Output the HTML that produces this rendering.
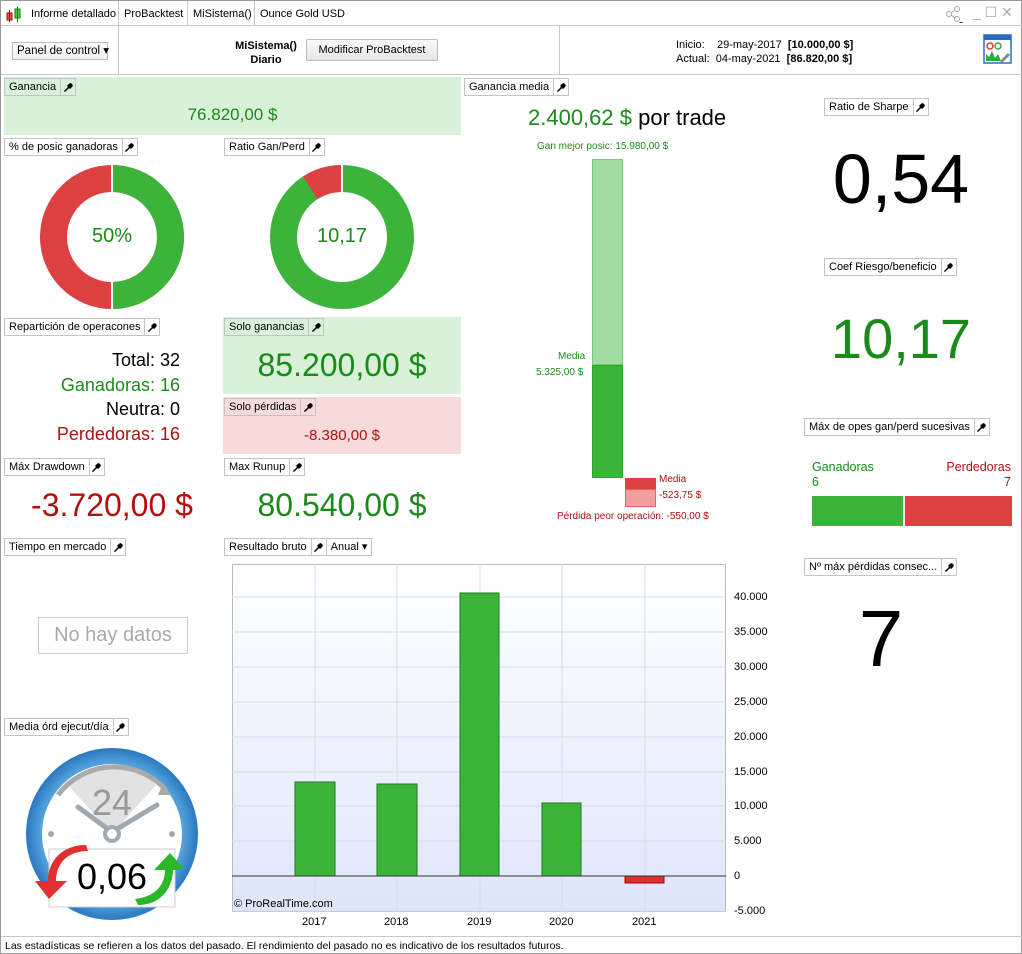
<!DOCTYPE html><html><head><meta charset="utf-8"><style>
*{margin:0;padding:0;box-sizing:border-box}
body{width:1022px;height:954px;position:relative;background:#fff;font-family:"Liberation Sans",Arial,sans-serif;font-size:11px;color:#000;overflow:hidden;border:1px solid #999}
.a{position:absolute}
.lb{position:absolute;height:18px;border:1px solid #c4c4c4;background:#fff;display:flex;font-size:11px;line-height:16px;white-space:nowrap}
.lb span{padding:0 4px}
.lb i{border-left:1px solid #c4c4c4;width:15px;display:flex;align-items:center;justify-content:center}
.g{color:#1a8a1a}.r{color:#b01010}
.c{text-align:center}
</style></head><body>
<svg width="0" height="0" style="position:absolute"><defs><symbol id="w" viewBox="0 0 10 10"><path d="M1 9L5 5M5 5L4.5 3L7 1L8 1.5L6.5 3L7 3.5L8.5 2L9 3L7 5.5L5 5Z" stroke="#000" stroke-width="1.6" fill="#000" stroke-linecap="round"/></symbol></defs></svg>
<!-- top bar -->
<div class="a" style="left:0;top:0;width:1022px;height:25px;border-bottom:1px solid #c8c8c8"></div>
<svg class="a" style="left:5px;top:6px" width="16" height="16"><rect x="1" y="6" width="5" height="7" fill="#e06060" stroke="#a00"/><line x1="3.5" y1="3" x2="3.5" y2="15" stroke="#a00"/><rect x="9" y="2" width="5" height="9" fill="#5c5" stroke="#080"/><line x1="11.5" y1="0" x2="11.5" y2="15" stroke="#080"/></svg>
<div class="a" style="left:30px;top:7px">Informe detallado</div>
<div class="a" style="left:117px;top:0;height:25px;border-left:1px solid #c8c8c8"></div>
<div class="a" style="left:123px;top:7px">ProBacktest</div>
<div class="a" style="left:186px;top:0;height:25px;border-left:1px solid #c8c8c8"></div>
<div class="a" style="left:192px;top:7px">MiSistema()</div>
<div class="a" style="left:253px;top:0;height:25px;border-left:1px solid #c8c8c8"></div>
<div class="a" style="left:259px;top:7px">Ounce Gold USD</div>
<svg class="a" style="left:944px;top:4px" width="20" height="18"><circle cx="4" cy="9" r="2.5" fill="none" stroke="#aaa"/><circle cx="12" cy="4" r="2.5" fill="none" stroke="#aaa"/><circle cx="12" cy="14" r="2.5" fill="none" stroke="#aaa"/><path d="M6 8L10 5M6 10L10 13" stroke="#aaa"/><path d="M14 17h4l-2 2z" fill="#333"/></svg>
<div class="a" style="left:972px;top:3px;color:#aaa;font-size:14px">_ ☐ ✕</div>
<!-- second row -->
<div class="a" style="left:0;top:73px;width:1022px;border-top:1px solid #c8c8c8"></div>
<div class="a" style="left:117px;top:25px;height:48px;border-left:1px solid #c8c8c8"></div>
<div class="a" style="left:558px;top:25px;height:48px;border-left:1px solid #c8c8c8"></div>
<div class="a" style="left:11px;top:41px;width:96px;height:18px;border:1px solid #bbb;background:linear-gradient(#fff,#eee);line-height:16px;padding-left:4px;font-size:11.5px;white-space:nowrap">Panel de control ▾</div>
<div class="a c" style="left:230px;top:38px;width:70px;font-weight:bold;line-height:14px">MiSistema()<br>Diario</div>
<div class="a c" style="left:305px;top:38px;width:132px;height:22px;border:1px solid #bbb;border-radius:2px;background:linear-gradient(#fafafa,#e6e6e6);line-height:20px">Modificar ProBacktest</div>
<div class="a" style="left:675px;top:37px;line-height:14px">Inicio:&nbsp;&nbsp;&nbsp; 29-may-2017&nbsp; <b>[10.000,00 $]</b><br>Actual:&nbsp; 04-may-2021&nbsp; <b>[86.820,00 $]</b></div>
<svg class="a" style="left:982px;top:33px" width="30" height="32"><rect x="1" y="1" width="27" height="28" fill="#fff" stroke="#2a6cc0" stroke-width="1.5"/><rect x="1" y="1" width="27" height="5" fill="#2a6cc0"/><circle cx="7" cy="12" r="3" fill="none" stroke="#d33" stroke-width="1.5"/><circle cx="15" cy="12" r="3" fill="none" stroke="#3a3" stroke-width="1.5"/><path d="M3 27V20l3 3 3-6 3 7 3-4 3 7z" fill="#3a3"/><path d="M18 28l8-8" stroke="#888" stroke-width="3"/></svg>
<!-- Ganancia -->
<div class="a" style="left:3px;top:76px;width:457px;height:58px;background:#d9f0d9"></div>
<div class="lb" style="left:3px;top:77px;background:#d9f0d9"><span>Ganancia</span><i><svg width="9" height="9"><use href="#w"/></svg></i></div>
<div class="a c g" style="left:3px;top:104px;width:457px;font-size:17px">76.820,00 $</div>
<!-- donuts -->
<div class="lb" style="left:3px;top:137px"><span>% de posic ganadoras</span><i><svg width="9" height="9"><use href="#w"/></svg></i></div>
<div class="lb" style="left:223px;top:137px"><span>Ratio Gan/Perd</span><i><svg width="9" height="9"><use href="#w"/></svg></i></div>
<svg class="a" style="left:39px;top:164px" width="144" height="144"><circle cx="72" cy="72" r="58.5" fill="none" stroke="#dc4040" stroke-width="27"/><path d="M72 13.5A58.5 58.5 0 0 1 72 130.5" fill="none" stroke="#3cb43c" stroke-width="27"/><line x1="72" y1="0" x2="72" y2="27" stroke="#fff" stroke-width="2"/><line x1="72" y1="117" x2="72" y2="144" stroke="#fff" stroke-width="2"/></svg>
<div class="a c g" style="left:39px;top:224px;width:144px;font-size:20px">50%</div>
<svg class="a" style="left:269px;top:164px" width="144" height="144"><circle cx="72" cy="72" r="58.5" fill="none" stroke="#3cb43c" stroke-width="27"/><path d="M72 13.5A58.5 58.5 0 0 0 40.3 22.8" fill="none" stroke="#dc4040" stroke-width="27"/><line x1="72" y1="0" x2="72" y2="27" stroke="#fff" stroke-width="2"/></svg>
<div class="a c g" style="left:269px;top:224px;width:144px;font-size:20px">10,17</div>
<!-- Reparticion -->
<div class="lb" style="left:3px;top:317px"><span>Repartición de operacones</span><i><svg width="9" height="9"><use href="#w"/></svg></i></div>
<div class="a" style="left:0;top:347px;width:179px;text-align:right;font-size:18px;line-height:24.5px"><div>Total: 32</div><div class="g">Ganadoras: 16</div><div>Neutra: 0</div><div class="r">Perdedoras: 16</div></div>
<div class="a" style="left:222px;top:316px;width:238px;height:77px;background:#d9f0d9"></div>
<div class="lb" style="left:223px;top:317px;background:#d9f0d9"><span>Solo ganancias</span><i><svg width="9" height="9"><use href="#w"/></svg></i></div>
<div class="a c g" style="left:222px;top:346px;width:238px;font-size:32px">85.200,00 $</div>
<div class="a" style="left:222px;top:396px;width:238px;height:57px;background:#f8dada"></div>
<div class="lb" style="left:223px;top:397px;background:#f8dada"><span>Solo pérdidas</span><i><svg width="9" height="9"><use href="#w"/></svg></i></div>
<div class="a c r" style="left:222px;top:426px;width:238px;font-size:15px">-8.380,00 $</div>
<div class="lb" style="left:3px;top:457px"><span>Máx Drawdown</span><i><svg width="9" height="9"><use href="#w"/></svg></i></div>
<div class="a c r" style="left:0;top:486px;width:222px;font-size:32px">-3.720,00 $</div>
<div class="lb" style="left:223px;top:457px"><span>Max Runup</span><i><svg width="9" height="9"><use href="#w"/></svg></i></div>
<div class="a c g" style="left:222px;top:486px;width:238px;font-size:32px">80.540,00 $</div>
<div class="lb" style="left:3px;top:537px"><span>Tiempo en mercado</span><i><svg width="9" height="9"><use href="#w"/></svg></i></div>
<div class="a c" style="left:37px;top:616px;width:150px;height:37px;border:1px solid #ccc;color:#aaa;font-size:20px;line-height:35px">No hay datos</div>
<div class="lb" style="left:3px;top:717px"><span>Media órd ejecut/día</span><i><svg width="9" height="9"><use href="#w"/></svg></i></div>
<!-- clock -->
<svg class="a" style="left:22px;top:744px" width="180" height="180">
<defs><radialGradient id="bg" cx="50%" cy="50%" r="50%"><stop offset="80%" stop-color="#5aa8e0"/><stop offset="100%" stop-color="#2a78c0"/></radialGradient></defs>
<circle cx="89" cy="89" r="86" fill="url(#bg)"/><circle cx="89" cy="89" r="70" fill="#fff"/>
<path d="M89 89L45 40A62 62 0 0 1 133 40Z" fill="#e2e2e2"/>
<path d="M35 50A70 70 0 0 1 143 45" fill="none" stroke="#aaa" stroke-width="5"/>
<path d="M140 38l8 12-13 0z" fill="#aaa"/>
<text x="89" y="70" text-anchor="middle" font-size="36" fill="#999" font-family="Liberation Sans">24</text>
<path d="M55 62L89 87L134 60" fill="none" stroke="#a0a8b0" stroke-width="5" stroke-linecap="round"/>
<circle cx="89" cy="89" r="7" fill="#fff" stroke="#a0a8b0" stroke-width="4"/>
<circle cx="28" cy="89" r="3" fill="#a0a8b0"/><circle cx="149" cy="89" r="3" fill="#a0a8b0"/>
<rect x="26" y="104" width="126" height="58" fill="#fff" stroke="#ccc"/>
<path d="M63 100C40 100 25 115 25 136L12 136L26 154L44 136L33 136C33 118 45 106 65 106Z" fill="#e03030"/>
<path d="M115 160C140 160 150 140 150 125L162 125L147 108L131 125L142 125C142 140 132 152 112 154Z" fill="#28b828"/>
</svg>
<div class="a c" style="left:48px;top:855px;width:126px;font-size:36px">0,06</div>
<!-- Ganancia media -->
<div class="lb" style="left:463px;top:77px"><span>Ganancia media</span><i><svg width="9" height="9"><use href="#w"/></svg></i></div>
<div class="a" style="left:527px;top:104px;font-size:22px"><span class="g">2.400,62 $</span> por trade</div>
<div class="a g" style="left:536px;top:140px;font-size:10px">Gan mejor posic: 15.980,00 $</div>
<div class="a" style="left:591px;top:158px;width:31px;height:206px;background:#a2dca2;border:1px solid #7c7"></div>
<div class="a" style="left:591px;top:364px;width:31px;height:113px;background:#3cb43c;border:1px solid #2a2"></div>
<div class="a g" style="left:557px;top:350px;font-size:10px">Media</div>
<div class="a g" style="left:535px;top:366px;font-size:10px">5.325,00 $</div>
<div class="a" style="left:624px;top:477px;width:31px;height:11px;background:#dc4040"></div>
<div class="a" style="left:624px;top:488px;width:31px;height:18px;background:#f0a0a0;border:1px solid #d66"></div>
<div class="a r" style="left:658px;top:473px;font-size:10px">Media</div>
<div class="a r" style="left:658px;top:489px;font-size:10px">-523,75 $</div>
<div class="a r" style="left:556px;top:510px;font-size:10px">Pérdida peor operación: -550,00 $</div>
<!-- Resultado bruto -->
<div class="lb" style="left:223px;top:537px"><span>Resultado bruto</span><i><svg width="9" height="9"><use href="#w"/></svg></i><span style="border-left:1px solid #c4c4c4">Anual ▾</span></div>
<div class="a" style="left:231px;top:563px;width:494px;height:348px;border:1px solid #bbb;background:linear-gradient(#fff,#dfe6fa)"></div>
<svg class="a" style="left:231px;top:563px" width="494" height="348">
<g stroke="#d8dce8"><line x1="0" y1="33" x2="494" y2="33"/><line x1="0" y1="68" x2="494" y2="68"/><line x1="0" y1="103" x2="494" y2="103"/><line x1="0" y1="138" x2="494" y2="138"/><line x1="0" y1="173" x2="494" y2="173"/><line x1="0" y1="208" x2="494" y2="208"/><line x1="0" y1="242" x2="494" y2="242"/><line x1="0" y1="277" x2="494" y2="277"/><line x1="0" y1="347" x2="494" y2="347"/>
<line x1="83" y1="0" x2="83" y2="348"/><line x1="165" y1="0" x2="165" y2="348"/><line x1="248" y1="0" x2="248" y2="348"/><line x1="330" y1="0" x2="330" y2="348"/><line x1="413" y1="0" x2="413" y2="348"/></g>
<g fill="#3cb43c" stroke="#1c7c1c"><rect x="63" y="218" width="40" height="94"/><rect x="145" y="220" width="40" height="92"/><rect x="228" y="29" width="39" height="283"/><rect x="310" y="239" width="39" height="73"/></g>
<rect x="393" y="312" width="39" height="7" fill="#dc3030" stroke="#a00"/>
<line x1="0" y1="312" x2="494" y2="312" stroke="#333"/>
</svg>
<div class="a" style="left:233px;top:897px;font-size:11px">© ProRealTime.com</div>
<div class="a" style="left:733px;top:579px;font-size:11px;line-height:34.9px">40.000<br>35.000<br>30.000<br>25.000<br>20.000<br>15.000<br>10.000<br>5.000<br>0<br>-5.000</div>
<div class="a" style="left:301px;top:915px">2017</div><div class="a" style="left:383px;top:915px">2018</div><div class="a" style="left:466px;top:915px">2019</div><div class="a" style="left:548px;top:915px">2020</div><div class="a" style="left:631px;top:915px">2021</div>
<!-- right column -->
<div class="lb" style="left:823px;top:97px"><span>Ratio de Sharpe</span><i><svg width="9" height="9"><use href="#w"/></svg></i></div>
<div class="a c" style="left:800px;top:138px;width:200px;font-size:70px">0,54</div>
<div class="lb" style="left:823px;top:257px"><span>Coef Riesgo/beneficio</span><i><svg width="9" height="9"><use href="#w"/></svg></i></div>
<div class="a c g" style="left:800px;top:305px;width:200px;font-size:56px">10,17</div>
<div class="lb" style="left:803px;top:417px"><span>Máx de opes gan/perd sucesivas</span><i><svg width="9" height="9"><use href="#w"/></svg></i></div>
<div class="a g" style="left:811px;top:459px;font-size:12.5px;line-height:15px">Ganadoras<br>6</div>
<div class="a r" style="left:900px;top:459px;width:110px;text-align:right;font-size:12.5px;line-height:15px">Perdedoras<br>7</div>
<div class="a" style="left:811px;top:495px;width:91px;height:30px;background:#3cb43c"></div>
<div class="a" style="left:904px;top:495px;width:107px;height:30px;background:#dc4040"></div>
<div class="lb" style="left:803px;top:557px"><span>Nº máx pérdidas consec...</span><i><svg width="9" height="9"><use href="#w"/></svg></i></div>
<div class="a c" style="left:780px;top:592px;width:200px;font-size:80px">7</div>
<!-- footer -->
<div class="a" style="left:0;top:935px;width:1022px;border-top:1px solid #c8c8c8"></div>
<div class="a" style="left:4px;top:939px;font-size:10.5px">Las estadísticas se refieren a los datos del pasado. El rendimiento del pasado no es indicativo de los resultados futuros.</div>
</body></html>
